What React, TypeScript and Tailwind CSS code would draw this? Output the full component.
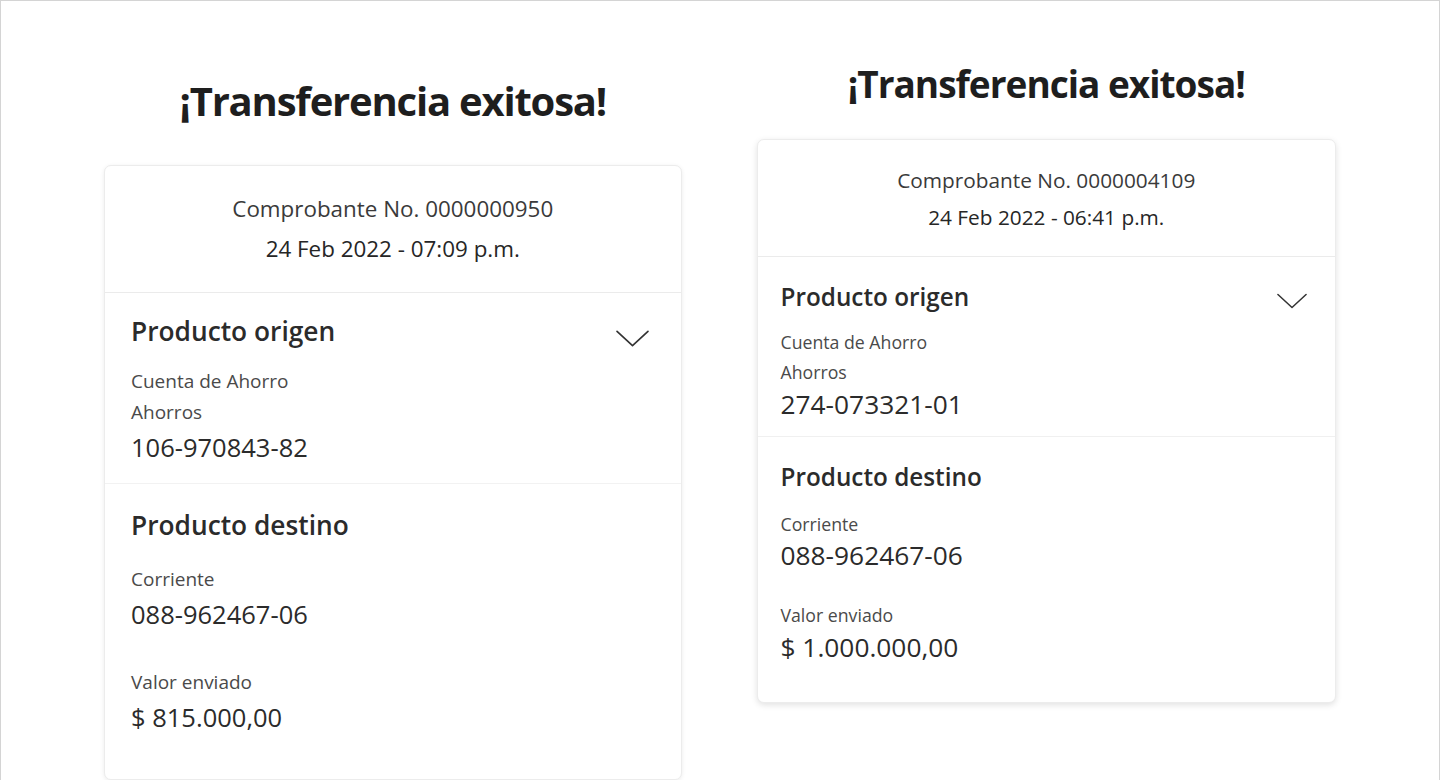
import { ReactNode } from "react";

function Chevron({ className }: { className?: string }) {
  return (
    <svg viewBox="0 0 32 16" className={className} fill="none" stroke="#333" strokeWidth="1.6" strokeLinecap="round" strokeLinejoin="round">
      <polyline points="1,1 16,15 31,1" />
    </svg>
  );
}

function Label({ children, className = "" }: { children: ReactNode; className?: string }) {
  return <div className={"text-[#4a4a4a] " + className}>{children}</div>;
}

export default function App() {
  return (
    <div className="w-[1440px] h-[780px] overflow-hidden bg-white border-x border-t border-[#d4d4d4] font-['Open_Sans',sans-serif] text-[#2b2b2b]">
      <div className="flex gap-[75px] px-[103px]">
        {/* left receipt */}
        <div className="w-[578px] flex flex-col">
          <h1 className="mt-[76px] h-[48px] text-center text-[40px] leading-[48px] font-bold tracking-[-1.2px] text-[#1e1e1e]">
            ¡Transferencia exitosa!
          </h1>
          <div className="mt-[40px] h-[615px] rounded-[7px] border border-[#ececec] shadow-[0_1px_4px_rgba(0,0,0,0.08)] bg-white">
            <div className="pt-[29px] pb-[29px] text-center text-[22.4px] leading-[28px] text-[#3a3a3a] border-b border-[#ebebeb]">
              <div>Comprobante No. 0000000950</div>
              <div className="mt-[12px] text-[#262626]">24 Feb 2022 - 07:09 p.m.</div>
            </div>
            <div className="pl-[26px] pr-[32px] pt-[22px] pb-[20px] border-b border-[#f2f2f2]">
              <div className="flex items-center justify-between">
                <div className="text-[26.3px] leading-[32px] font-semibold">Producto origen</div>
                <Chevron className="w-[33px] h-[17px] mt-[14px]" />
              </div>
              <Label className="mt-[21px] text-[19px] leading-[26px]">Cuenta de Ahorro</Label>
              <Label className="mt-[5px] text-[19px] leading-[26px]">Ahorros</Label>
              <div className="mt-[6px] text-[25.5px] leading-[32px] font-medium">106-970843-82</div>
            </div>
            <div className="pl-[26px] pt-[25px]">
              <div className="text-[26.3px] leading-[32px] font-semibold">Producto destino</div>
              <Label className="mt-[25px] text-[19px] leading-[26px]">Corriente</Label>
              <div className="mt-[6px] text-[25.5px] leading-[32px] font-medium">088-962467-06</div>
              <Label className="mt-[39px] text-[19px] leading-[26px]">Valor enviado</Label>
              <div className="mt-[6px] text-[25.5px] leading-[32px] font-medium">$ 815.000,00</div>
            </div>
          </div>
        </div>

        {/* right receipt */}
        <div className="w-[580px] flex flex-col">
          <h1 className="mt-[61px] h-[44px] text-center text-[37px] leading-[44px] font-bold tracking-[-1px] text-[#1e1e1e]">
            ¡Transferencia exitosa!
          </h1>
          <div className="mt-[33px] h-[564px] rounded-[7px] border border-[#ececec] shadow-[0_2px_6px_rgba(0,0,0,0.12)] bg-white">
            <div className="pt-[27px] pb-[26px] text-center text-[20.8px] leading-[26px] text-[#3a3a3a] border-b border-[#ebebeb]">
              <div>Comprobante No. 0000004109</div>
              <div className="mt-[11px] text-[#262626]">24 Feb 2022 - 06:41 p.m.</div>
            </div>
            <div className="pl-[23px] pr-[28px] pt-[25px] pb-[17px] border-b border-[#f0f0f0]">
              <div className="flex items-center justify-between">
                <div className="text-[24.3px] leading-[30px] font-semibold">Producto origen</div>
                <Chevron className="w-[30px] h-[16px] mt-[8px]" />
              </div>
              <Label className="mt-[18px] text-[17.7px] leading-[24px]">Cuenta de Ahorro</Label>
              <Label className="mt-[6px] text-[17.7px] leading-[24px]">Ahorros</Label>
              <div className="mt-[5px] text-[26.3px] leading-[30px]">274-073321-01</div>
            </div>
            <div className="pl-[23px] pt-[25px]">
              <div className="text-[24.3px] leading-[30px] font-semibold">Producto destino</div>
              <Label className="mt-[20px] text-[17.7px] leading-[24px]">Corriente</Label>
              <div className="mt-[4px] text-[26.3px] leading-[30px]">088-962467-06</div>
              <Label className="mt-[33px] text-[17.7px] leading-[24px]">Valor enviado</Label>
              <div className="mt-[5px] text-[26.3px] leading-[30px]">$ 1.000.000,00</div>
            </div>
          </div>
        </div>
      </div>
    </div>
  );
}
